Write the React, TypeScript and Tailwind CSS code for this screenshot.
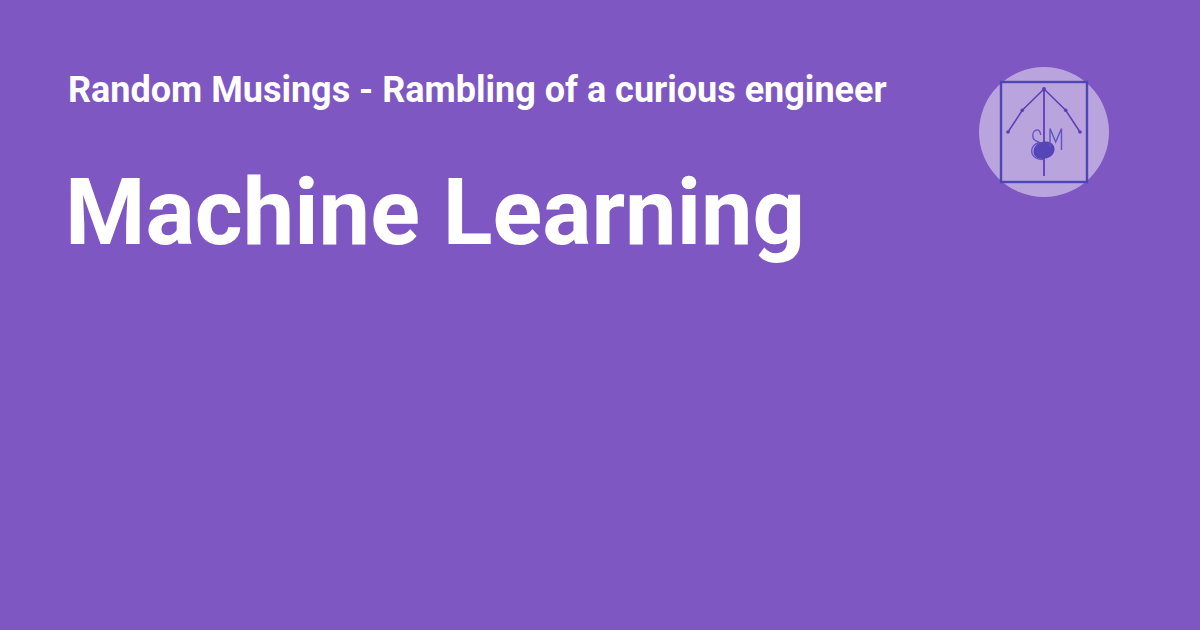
import React from "react";

const Logo = () => (
  <svg width="130" height="130" viewBox="0 0 130 130" fill="none" className="block shrink-0">
    <circle cx="65" cy="65" r="65" fill="#fff" fillOpacity="0.46" />
    <rect x="22" y="15" width="86" height="100" stroke="#4f46b5" strokeWidth="2.4" />
    <path d="M65 22V109" stroke="#6a45bd" strokeWidth="2" />
    <path d="M29 65L43.3 43.3L65 22L86.7 43.3L101 65" stroke="#5b3fb5" strokeWidth="1.5" />
    <circle cx="65" cy="22" r="2" fill="#5b3fb5" />
    <circle cx="43.3" cy="43.3" r="1.8" fill="#5b3fb5" />
    <circle cx="86.7" cy="43.3" r="1.8" fill="#5b3fb5" />
    <circle cx="29" cy="65" r="1.8" fill="#5b3fb5" />
    <circle cx="101" cy="65" r="1.8" fill="#5b3fb5" />
    <path d="M54.5 84C55 77.5 61.5 74.5 67 74.5C72.5 74.5 76 78.5 75.5 83C75 88.5 69.5 92 63.5 92C58 92 54 88.5 54.5 84Z" fill="#5545b8" />
    <path d="M71 80V61.5L76.7 75L82.5 61.5V83" stroke="#5f55c2" strokeWidth="1.4" />
    <path d="M61.7 68C61.5 64.5 59.5 62.5 57.5 63C55 63.5 53.5 66.5 53.8 69.5C54 73 57.5 74.5 60.5 75.5C55 77 52.5 80 52.7 84.5C53 89.5 58 93 66 92.5" stroke="#5f55c2" strokeWidth="1.4" />
  </svg>
);

export default function App() {
  return (
    <div className="h-[630px] w-[1200px] overflow-hidden bg-[#7e57c2] font-['Roboto',sans-serif] text-white">
      <div className="flex items-start justify-between pl-[68px] pr-[91px] pt-[67px]">
        <div>
          <p className="text-[36px] font-bold leading-[46px]">
            Random Musings - Rambling of a curious engineer
          </p>
          <h1 className="-ml-[3px] mt-[42px] text-[92px] font-bold leading-[115px]">
            Machine Learning
          </h1>
        </div>
        <Logo />
      </div>
    </div>
  );
}
